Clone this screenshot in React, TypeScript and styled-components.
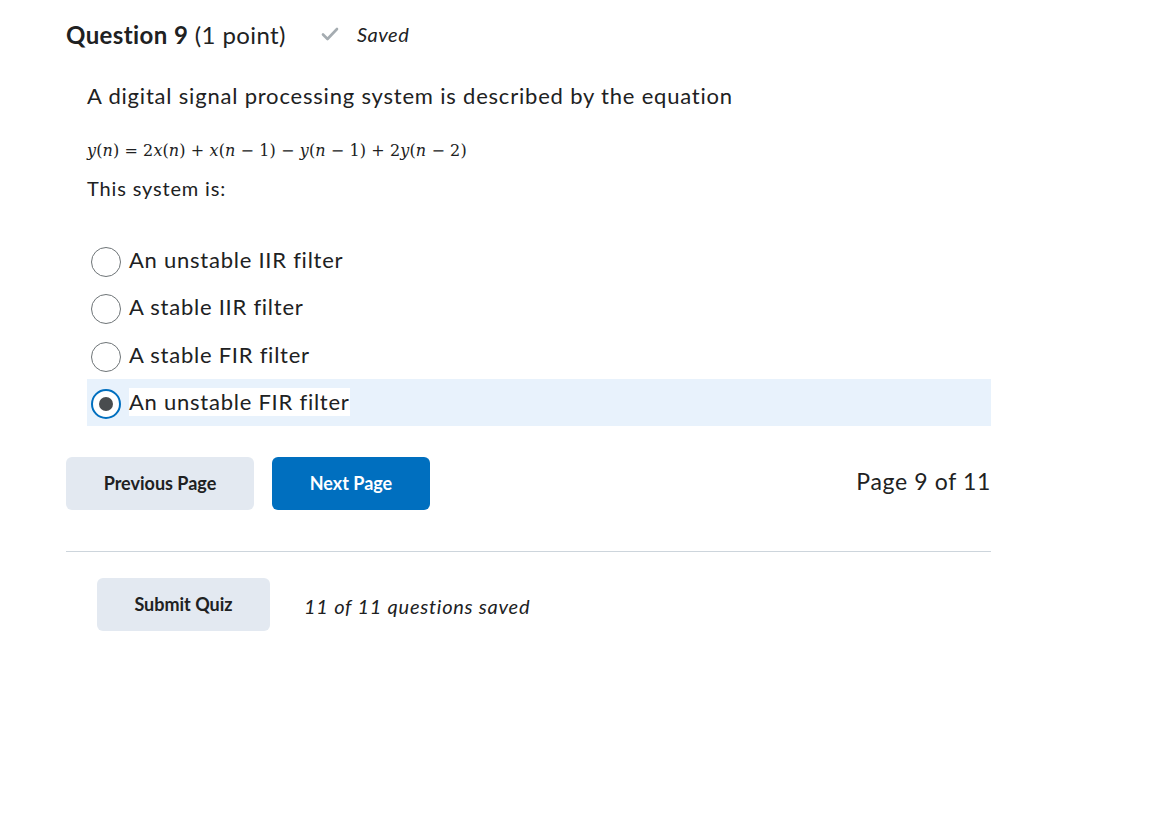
import React, { useState } from "react";
import styled, { createGlobalStyle } from "styled-components";

const Global = createGlobalStyle`
  html, body { margin: 0; padding: 0; background: #fff; }
  body {
    font-family: Lato, "Noto Sans", sans-serif;
    color: #202122;
    font-variant-ligatures: none;
  }
`;

const Page = styled.div`
  width: 925px;
  padding: 15px 0 0 66px;
`;

const Header = styled.div`
  display: flex;
  align-items: center;
  height: 38px;
`;

const Title = styled.h2`
  margin: 0;
  font-size: 24px;
  font-weight: 400;
  letter-spacing: 0.4px;
  color: #202122;
  b { font-weight: 700; }
`;

const SavedTag = styled.span`
  display: inline-flex;
  align-items: center;
  gap: 18px;
  margin-left: 35px;
  font-style: italic;
  font-size: 20px;
  letter-spacing: 0.5px;
  color: #202122;
`;

const Body = styled.div`
  padding: 0 0 0 21px;
`;

const Prompt = styled.p`
  margin: 27px 0 0;
  font-size: 22px;
  letter-spacing: 0.8px;
  line-height: 32px;
`;

const Equation = styled.div`
  margin-top: 27px;
  font-family: "DejaVu Serif", "Liberation Serif", serif;
  font-size: 16px;
  letter-spacing: 0.1px;
  line-height: 24px;
  i { font-style: italic; }
`;

const Sub = styled.p`
  margin: 11px 0 0;
  font-size: 20px;
  letter-spacing: 0.85px;
  line-height: 28px;
`;

const Options = styled.div`
  margin-top: 34px;
  display: flex;
  flex-direction: column;
`;

const OptionRow = styled.label<{ $selected: boolean }>`
  display: flex;
  align-items: center;
  height: 47.5px;
  padding-left: 4px;
  background: ${(p) => (p.$selected ? "#e8f2fc" : "transparent")};
  cursor: pointer;
`;

const Radio = styled.span<{ $checked: boolean }>`
  box-sizing: border-box;
  width: 30px;
  height: 30px;
  border-radius: 50%;
  border: ${(p) => (p.$checked ? "2px solid #006fbf" : "1px solid #6e7477")};
  background: #fff;
  display: flex;
  align-items: center;
  justify-content: center;
  margin-right: 8px;
  margin-top: 4px;
  &::after {
    content: "";
    display: ${(p) => (p.$checked ? "block" : "none")};
    width: 14px;
    height: 14px;
    border-radius: 50%;
    background: #494c4e;
  }
`;

const OptionText = styled.span<{ $selected: boolean }>`
  font-size: 22px;
  letter-spacing: 0.75px;
  line-height: 28px;
  background: ${(p) => (p.$selected ? "#fff" : "transparent")};
`;

const NavRow = styled.div`
  display: flex;
  align-items: center;
  margin-top: 31px;
`;

const Button = styled.button<{ $primary?: boolean; $w: number }>`
  height: 53px;
  width: ${(p) => p.$w}px;
  border: none;
  border-radius: 6px;
  font-family: Lato, "Noto Sans", sans-serif;
  font-weight: 700;
  font-size: 18px;
  padding-bottom: 2px;
  background: ${(p) => (p.$primary ? "#006fbf" : "#e3e9f1")};
  color: ${(p) => (p.$primary ? "#fff" : "#202122")};
  margin-right: 18px;
  cursor: pointer;
`;

const PageCount = styled.span`
  margin-left: auto;
  padding-bottom: 5px;
  font-size: 23px;
  letter-spacing: 0.65px;
  color: #202122;
`;

const Divider = styled.hr`
  border: none;
  border-top: 1px solid #cdd5dc;
  margin: 41px 0 0;
`;

const SubmitRow = styled.div`
  display: flex;
  align-items: center;
  padding-left: 31px;
  margin-top: 26px;
`;

const SavedCount = styled.span`
  margin-left: 16px;
  font-style: italic;
  font-size: 20px;
  letter-spacing: 0.75px;
  padding-top: 2px;
`;

const options = [
  "An unstable IIR filter",
  "A stable IIR filter",
  "A stable FIR filter",
  "An unstable FIR filter",
];

export default function App() {
  const [sel, setSel] = useState(3);
  return (
    <>
      <Global />
      <Page>
        <Header>
          <Title>
            <b>Question 9</b> (1 point)
          </Title>
          <SavedTag>
            <svg width="18" height="14" viewBox="0 0 18 14" aria-hidden>
              <path d="M2 7.5 L6.5 12 L16 2" fill="none" stroke="#a5acb1" strokeWidth="2.6" strokeLinecap="round" strokeLinejoin="round" />
            </svg>
            Saved
          </SavedTag>
        </Header>
        <Body>
          <Prompt>A digital signal processing system is described by the equation</Prompt>
          <Equation>
            <i>y</i>(<i>n</i>) = 2<i>x</i>(<i>n</i>) + <i>x</i>(<i>n</i> − 1) − <i>y</i>(<i>n</i> − 1) + 2<i>y</i>(<i>n</i> − 2)
          </Equation>
          <Sub>This system is:</Sub>
          <Options>
            {options.map((o, i) => (
              <OptionRow key={o} $selected={sel === i} onClick={() => setSel(i)}>
                <Radio $checked={sel === i} />
                <OptionText $selected={sel === i}>{o}</OptionText>
              </OptionRow>
            ))}
          </Options>
        </Body>
        <NavRow>
          <Button $w={188}>Previous Page</Button>
          <Button $w={158} $primary>Next Page</Button>
          <PageCount>Page 9 of 11</PageCount>
        </NavRow>
        <Divider />
        <SubmitRow>
          <Button $w={173}>Submit Quiz</Button>
          <SavedCount>11 of 11 questions saved</SavedCount>
        </SubmitRow>
      </Page>
    </>
  );
}
